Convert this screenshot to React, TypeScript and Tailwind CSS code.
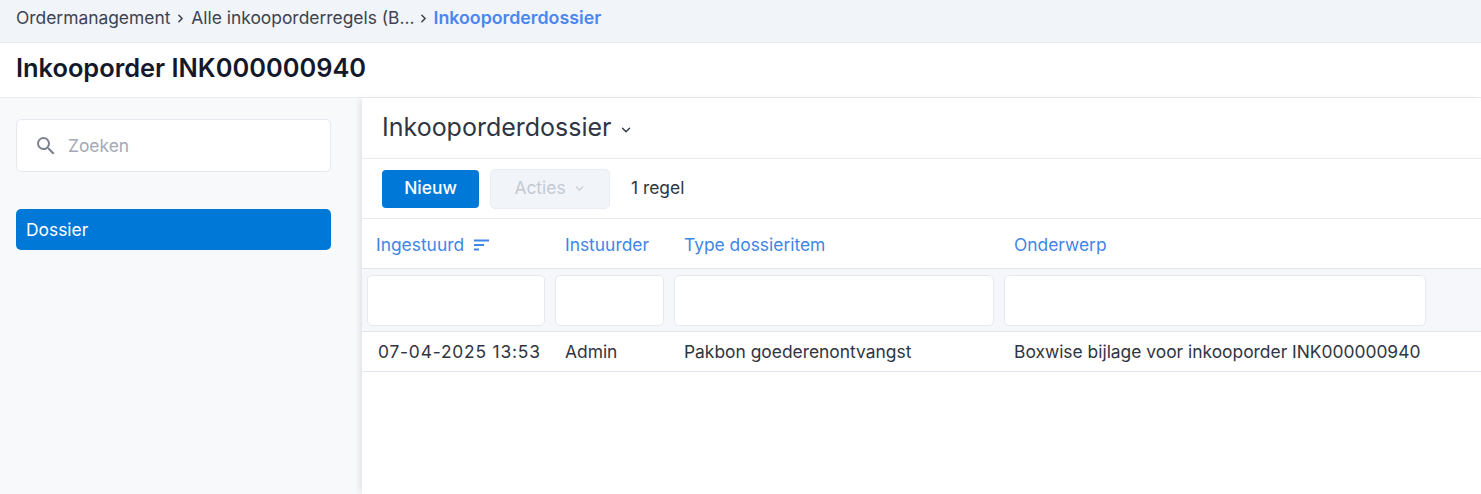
import { ChevronDown, ChevronRight } from "lucide-react";

const Crumb = ({ label, active }: { label: string; active?: boolean }) => (
  <span className={active ? "text-[17.8px] font-semibold text-[#4b86f0]" : "text-[#3d4350]"}>{label}</span>
);

const FilterInput = ({ width }: { width: string }) => (
  <div className={`h-[51px] rounded-[5px] border border-[#e6e9ef] bg-white ${width}`} />
);

const SortIcon = () => (
  <svg width="17" height="12" viewBox="0 0 17 12" className="text-[#3f86e6]">
    <path d="M1 1.5h15M1 6h10M1 10.5h5" stroke="currentColor" strokeWidth="1.8" fill="none" />
  </svg>
);

const SearchIcon = () => (
  <svg width="24" height="24" viewBox="0 0 24 24" fill="currentColor" className="text-[#7c828d]">
    <path d="M15.5 14h-.79l-.28-.27A6.471 6.471 0 0 0 16 9.5 6.5 6.5 0 1 0 9.5 16c1.61 0 3.09-.59 4.23-1.57l.27.28v.79l5 4.99L20.49 19l-4.99-5zm-6 0C7.01 14 5 11.99 5 9.5S7.01 5 9.5 5 14 7.01 14 9.5 11.99 14 9.5 14z" />
  </svg>
);

export default function App() {
  return (
    <div className="flex h-[494px] w-[1481px] flex-col overflow-hidden bg-white font-['Inter',sans-serif] text-[17.4px] text-[#2f3542]">
      <nav className="flex h-[43px] shrink-0 items-center gap-[4px] border-b border-[#e6e9ef] bg-[#f1f4f9] pb-[6px] pl-4">
        <Crumb label="Ordermanagement" />
        <ChevronRight size={13} strokeWidth={2.8} className="text-[#3d4350]" />
        <Crumb label="Alle inkooporderregels (B..." />
        <ChevronRight size={13} strokeWidth={2.8} className="-ml-[1px] text-[#3d4350]" />
        <span className="-ml-[1px]">
          <Crumb label="Inkooporderdossier" active />
        </span>
      </nav>

      <header className="flex h-[55px] shrink-0 items-center border-b border-[#e9ebf0] pb-[4px] pl-4">
        <h1 className="text-[25.4px] font-semibold text-[#14182a]">Inkooporder INK000000940</h1>
      </header>

      <div className="flex min-h-0 flex-1">
        <aside className="w-[362px] shrink-0 bg-[#f8f9fb] pl-4 pr-[31px] pt-[21px]">
          <div className="flex h-[53px] items-center rounded-[5px] border border-[#e6e9ef] bg-white pl-[17px]">
            <SearchIcon />
            <span className="ml-[10px] pt-[1px] text-[#a4a9b6]">Zoeken</span>
          </div>
          <div className="mt-[37px] flex h-[41px] items-center rounded-[5px] bg-[#0078d7] pl-[10px] pt-[1px] text-white">
            Dossier
          </div>
        </aside>

        <main className="relative min-w-0 flex-1 shadow-[-4px_0_6px_-2px_rgba(30,40,60,0.12)]">
          <div className="flex h-[61px] items-center gap-[7px] border-b border-[#e9ebf0] pl-[20px]">
            <h2 className="text-[25px] font-normal text-[#2f3542]">Inkooporderdossier</h2>
            <ChevronDown size={14} strokeWidth={2.4} className="mt-1 text-[#2f3542]" />
          </div>

          <div className="flex h-[60px] items-center border-b border-[#e9ebf0] pl-[20px]">
            <button className="h-[38px] w-[97px] rounded-[4px] bg-[#0078d7] font-medium text-white">Nieuw</button>
            <button className="ml-[11px] flex h-[40px] w-[120px] items-center justify-center gap-[7px] rounded-[5px] border border-[#e9edf3] bg-[#f1f4f8] text-[#c3c9d3]">
              Acties
              <ChevronDown size={13} strokeWidth={2} />
            </button>
            <span className="ml-[21px] text-[#2f3542]">1 regel</span>
          </div>

          <div className="flex h-[50px] items-center border-b border-[#e3e7ef] pt-[4px] text-[#3f86e6]">
            <div className="flex w-[203px] items-center gap-[9px] pl-[14px]">
              Ingestuurd
              <SortIcon />
            </div>
            <div className="w-[119px]">Instuurder</div>
            <div className="w-[330px]">Type dossieritem</div>
            <div>Onderwerp</div>
          </div>

          <div className="flex h-[63px] items-center gap-[10px] border-b border-[#e3e7ef] bg-[#f6f7fa] pl-[5px]">
            <FilterInput width="w-[178px]" />
            <FilterInput width="w-[109px]" />
            <FilterInput width="w-[320px]" />
            <FilterInput width="w-[422px]" />
          </div>

          <div className="flex h-[40px] items-center border-b border-[#e3e7ef] pt-[2px] text-[#2f3542]">
            <div className="w-[203px] pl-[16px] tracking-[0.8px]">07-04-2025 13:53</div>
            <div className="w-[119px]">Admin</div>
            <div className="w-[330px]">Pakbon goederenontvangst</div>
            <div>Boxwise bijlage voor inkooporder INK000000940</div>
          </div>
        </main>
      </div>
    </div>
  );
}
